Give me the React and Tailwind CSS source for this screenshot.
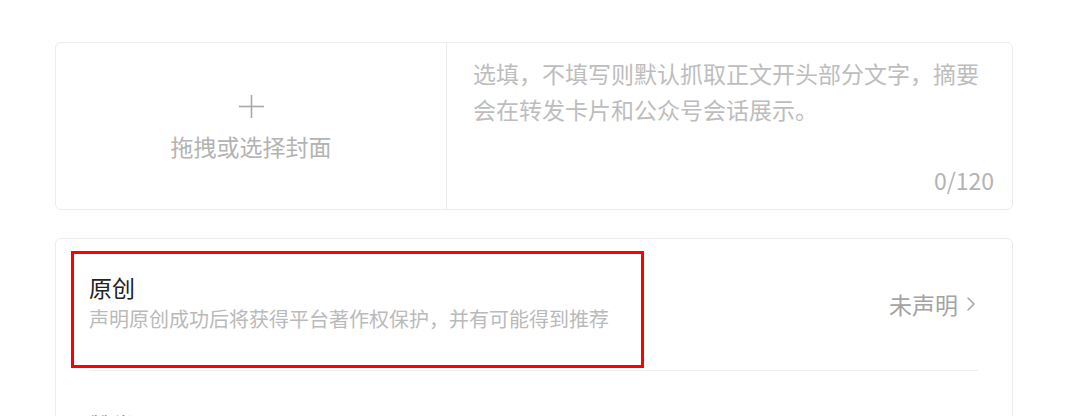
const font = "font-['Noto_Sans_CJK_SC','Noto_Sans',sans-serif]";

function Chevron({ className = "" }) {
  return (
    <svg width="10" height="16" viewBox="0 0 10 16" className={className} fill="none">
      <polyline points="2,2 8,8 2,14" stroke="currentColor" strokeWidth="1.5" strokeLinecap="round" strokeLinejoin="round" />
    </svg>
  );
}

function CoverPicker() {
  return (
    <div className="w-[391px] shrink-0 border-r border-[#ececec] flex flex-col items-center pt-[52px]">
      <svg width="25" height="23" viewBox="0 0 25 23" className="text-[#a9a9a9]">
        <line x1="0" y1="11.5" x2="25" y2="11.5" stroke="currentColor" strokeWidth="1.6" />
        <line x1="12.5" y1="0" x2="12.5" y2="23" stroke="currentColor" strokeWidth="1.6" />
      </svg>
      <div className="mt-[13px] text-[23px] leading-[30px] text-[#b3b3b3]">拖拽或选择封面</div>
    </div>
  );
}

function DigestInput() {
  return (
    <div className="flex-1 flex flex-col pl-[26px] pr-[18px] pt-[12px] pb-[14px]">
      <div className="w-[515px] text-[23px] leading-[36px] text-[#bdbdbd]">
        选填，不填写则默认抓取正文开头部分文字，摘要会在转发卡片和公众号会话展示。
      </div>
      <div className="mt-auto self-end text-[23px] leading-[30px] text-[#b3b3b3]">0/120</div>
    </div>
  );
}

function SettingRow({ title, desc, value, height, divider }) {
  return (
    <div className={`flex items-center justify-between ${height} ${divider ? "border-b border-[#ededed]" : ""}`}>
      <div className="flex flex-col pb-[5px]">
        <div className="text-[23px] leading-[32px] text-[#222222]">{title}</div>
        {desc && <div className="mt-[1px] text-[20px] leading-[30px] text-[#bababa]">{desc}</div>}
      </div>
      <div className="flex items-center gap-[8px] text-[#a3a3a3] pb-[2px]">
        <span className="text-[23px] leading-[30px]">{value}</span>
        <Chevron className="mr-[2px]" />
      </div>
    </div>
  );
}

export default function App() {
  return (
    <div className={`w-[1080px] h-[416px] overflow-hidden bg-white ${font}`}>
      <div className="pt-[42px] pl-[55px]">
        <div className="w-[958px] h-[168px] flex border border-[#ececec] rounded-[6px]">
          <CoverPicker />
          <DigestInput />
        </div>

        <div className="relative mt-[28px] w-[958px] h-[200px] border border-[#ececec] rounded-[6px] pl-[33px] pr-[34px]">
          <SettingRow
            title="原创"
            desc="声明原创成功后将获得平台著作权保护，并有可能得到推荐"
            value="未声明"
            height="h-[132px]"
            divider
          />
          <SettingRow title="赞赏" value="声明原创后才可开启" height="h-[112px]" />
          <div className="absolute left-[15px] top-[12px] w-[573px] h-[117px] border-[3px] border-[#ff0000]" />
        </div>
      </div>
    </div>
  );
}
